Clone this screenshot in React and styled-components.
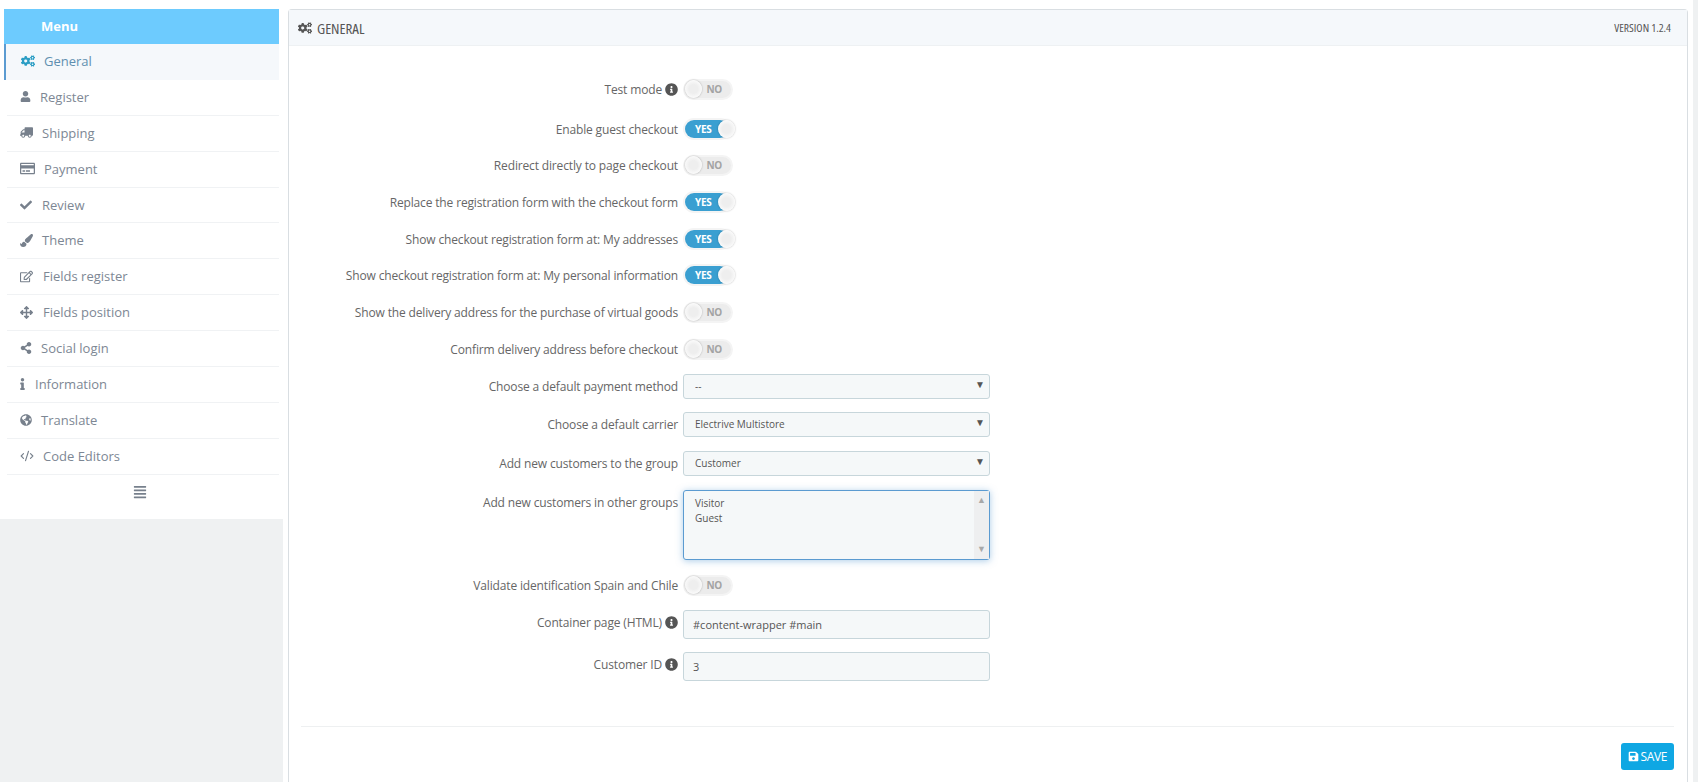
import React from "react";
import styled, { createGlobalStyle } from "styled-components";
import {
  FaCogs,
  FaUser,
  FaTruck,
  FaRegCreditCard,
  FaCheck,
  FaPaintBrush,
  FaRegEdit,
  FaArrowsAlt,
  FaShareAlt,
  FaInfo,
  FaGlobeAmericas,
  FaAlignJustify,
  FaInfoCircle,
  FaSave,
} from "react-icons/fa";
import { CodeXml } from "lucide-react";

const GlobalStyle = createGlobalStyle`
  html, body {
    margin: 0;
    height: 782px;
    overflow: hidden;
    background: #fff;
    font-family: "Open Sans", "Noto Sans", sans-serif;
  }
  * { box-sizing: border-box; }
`;

const Page = styled.div`
  display: flex;
  height: 782px;
  background: #fff;
`;

const Sidebar = styled.aside`
  flex: 0 0 283px;
  padding-top: 9px;
  background: linear-gradient(#fff 519px, #eff1f2 519px);
`;

const SidebarInner = styled.div`
  width: 283px;
  height: 510px;
  padding-left: 4px;
  padding-right: 4px;
  background: #fff;
`;

const MenuTitle = styled.div`
  height: 35px;
  padding-left: 37px;
  background: #6dcbfe;
  color: #fff;
  font-size: 13px;
  font-weight: 700;
  line-height: 34px;
`;

const MenuItem = styled.div`
  display: flex;
  align-items: center;
  gap: ${(p) => p.$gap || 8}px;
  height: 35.9px;
  margin-left: ${(p) => (p.$active ? 0 : 3)}px;
  padding: 0 0 1px ${(p) => (p.$active ? 15 : 13)}px;
  font-size: 13px;
  color: ${(p) => (p.$active ? "#5f8fb0" : "#7d8794")};
  background: ${(p) => (p.$active ? "#f5f8fb" : "#fff")};
  border-left: ${(p) => (p.$active ? "2px solid #5b9bd1" : "none")};
  border-bottom: ${(p) => (p.$active ? "none" : "1px solid #f0f2f4")};

  svg {
    flex: none;
    color: ${(p) => (p.$active ? "#2a9dc4" : "#77808c")};
  }
`;

const FlippedTruck = styled(FaTruck)`
  transform: scaleX(-1);
`;

const SlimInfo = styled(FaInfo)`
  width: 5px;
  height: 12px;
`;

const MenuToggle = styled.div`
  display: flex;
  justify-content: center;
  padding: 10px 3px 0 0;
  color: #77808c;
`;

const Panel = styled.main`
  flex: 0 0 1400px;
  margin: 9px 0 0 5px;
  border: 1px solid #d9dee2;
  border-bottom: none;
  border-radius: 4px 4px 0 0;
  background: #fff;
`;

const Strip = styled.div`
  flex: 1;
  background: linear-gradient(to right, #fff 5px, #eff1f2 5px);
`;

const PanelHeader = styled.header`
  display: flex;
  align-items: center;
  justify-content: space-between;
  height: 36px;
  padding: 0 16px 0 9px;
  background: #f5f8fb;
  border-bottom: 1px solid #eef1f3;
  color: #555;
`;

const HeaderTitle = styled.h3`
  display: flex;
  align-items: center;
  gap: 5px;
  margin: 0;
  font-size: 15px;
  font-weight: 400;
  font-stretch: 75%;
`;

const Version = styled.span`
  font-size: 11.5px;
  font-stretch: 75%;
`;

const Form = styled.form`
  display: flex;
  flex-direction: column;
  padding: 29px 0 0;
  height: 680px;
`;

const Row = styled.div`
  display: flex;
  align-items: ${(p) => (p.$top ? "flex-start" : "center")};
  gap: 5px;
  flex: none;
  height: ${(p) => p.$h || 28}px;
  margin-top: ${(p) => p.$mt || 0}px;
`;

const Label = styled.label`
  display: flex;
  align-items: center;
  justify-content: flex-end;
  gap: 3px;
  flex: 0 0 389px;
  font-size: 12px;
  letter-spacing: -0.15px;
  color: #666;
  white-space: nowrap;
  padding-top: ${(p) => (p.$top ? 4 : 0)}px;
  padding-bottom: ${(p) => (p.$raised ? 4 : 0)}px;

  svg {
    color: #555;
  }
`;

const Toggle = styled.div`
  position: relative;
  display: flex;
  align-items: center;
  width: ${(p) => (p.$on ? 50 : 46)}px;
  height: 18px;
  margin-left: 2px;
`;

const Track = styled.div`
  display: flex;
  align-items: center;
  justify-content: ${(p) => (p.$on ? "flex-start" : "flex-end")};
  width: ${(p) => (p.$on ? 44 : 46)}px;
  height: ${(p) => (p.$on ? 18 : 17)}px;
  padding: ${(p) => (p.$on ? "0 0 0 10px" : "0 9px 0 0")};
  border-radius: 9px;
  background: ${(p) => (p.$on ? "#3a9fd1" : "#ececec")};
  box-shadow: 0 0 0 2px #f4f4f4;
  color: ${(p) => (p.$on ? "#fff" : "#a3a3a3")};
  font-size: 10px;
  font-weight: 700;
  letter-spacing: -0.3px;
`;

const Knob = styled.span`
  position: absolute;
  top: 0;
  left: ${(p) => (p.$on ? 33 : 0)}px;
  width: 17px;
  height: 18px;
  border-radius: 50%;
  background: radial-gradient(circle, #eeeeee 35%, #ffffff 85%);
  box-shadow: 0 0 2px rgba(0, 0, 0, 0.3);
`;

const SelectBox = styled.div`
  position: relative;
  width: 307px;
`;

const Select = styled.select`
  display: block;
  width: 100%;
  height: ${(p) => p.$h || 25}px;
  padding: 0 10px 0 11px;
  appearance: none;
  border: 1px solid #c7d6db;
  border-radius: 3px;
  background: #f5f8f9;
  color: #555;
  font-family: inherit;
  font-size: 10px;
  outline: none;
`;

const Arrow = styled.span`
  position: absolute;
  top: 3px;
  right: 5px;
  color: #555;
  font-size: 10px;
  pointer-events: none;
`;

const ListBox = styled.div`
  display: flex;
  width: 307px;
  height: 70px;
  border: 1px solid #5b9bd1;
  border-radius: 3px;
  background: #f5f8f9;
  box-shadow: 0 1px 7px rgba(91, 155, 209, 0.5);
`;

const ListItems = styled.div`
  flex: 1;
  padding: 5px 11px;
  color: #555;
  font-size: 10px;
  line-height: 15px;
`;

const ScrollRail = styled.div`
  display: flex;
  flex-direction: column;
  justify-content: space-between;
  align-items: center;
  width: 15px;
  padding: 4px 0 5px;
  background: #eeeff0;
  color: #a8a8a8;
  font-size: 9px;
  line-height: 10px;
`;

const TextInput = styled.input`
  display: block;
  width: 307px;
  height: ${(p) => p.$h || 29}px;
  padding: 0 9px;
  border: 1px solid #c7d6db;
  border-radius: 3px;
  background: #f5f8f9;
  color: #555;
  font-family: inherit;
  font-size: 11px;
  outline: none;
`;

const PanelFooter = styled.footer`
  display: flex;
  justify-content: flex-end;
  margin: 0 13px 0 12px;
  padding-top: 16px;
  border-top: 1px solid #eef0f1;
`;

const SaveButton = styled.button`
  display: flex;
  align-items: center;
  gap: 2px;
  height: 27px;
  padding: 0 7px;
  border: none;
  border-radius: 3px;
  background: #0fa7e3;
  color: #fff;
  font-family: inherit;
  font-size: 12px;
  letter-spacing: -0.4px;
`;

const menu = [
  { label: "General", Icon: FaCogs, size: 14, active: true, gap: 9 },
  { label: "Register", Icon: FaUser, size: 11, gap: 9 },
  { label: "Shipping", Icon: FlippedTruck, size: 13, gap: 9 },
  { label: "Payment", Icon: FaRegCreditCard, size: 15, gap: 9 },
  { label: "Review", Icon: FaCheck, size: 12, gap: 10 },
  { label: "Theme", Icon: FaPaintBrush, size: 13, gap: 9 },
  { label: "Fields register", Icon: FaRegEdit, size: 13, gap: 10 },
  { label: "Fields position", Icon: FaArrowsAlt, size: 13, gap: 10 },
  { label: "Social login", Icon: FaShareAlt, size: 12, gap: 9 },
  { label: "Information", Icon: SlimInfo, gap: 10 },
  { label: "Translate", Icon: FaGlobeAmericas, size: 12, gap: 9 },
  { label: "Code Editors", Icon: CodeXml, size: 14, gap: 9 },
];

const Switch = ({ on }) => (
  <Toggle $on={on}>
    <Track $on={on}>{on ? "YES" : "NO"}</Track>
    <Knob $on={on} />
  </Toggle>
);

const Info = () => <FaInfoCircle size={13} />;

const Dropdown = ({ value }) => (
  <SelectBox>
    <Select defaultValue={value}>
      <option>{value}</option>
    </Select>
    <Arrow>▼</Arrow>
  </SelectBox>
);

export default function App() {
  return (
    <Page>
      <GlobalStyle />
      <Sidebar>
        <SidebarInner>
          <MenuTitle>Menu</MenuTitle>
          {menu.map(({ label, Icon, size, active, gap }) => (
            <MenuItem key={label} $active={active} $gap={gap}>
              <Icon size={size} />
              {label}
            </MenuItem>
          ))}
          <MenuToggle>
            <FaAlignJustify size={14} />
          </MenuToggle>
        </SidebarInner>
      </Sidebar>
      <Panel>
        <PanelHeader>
          <HeaderTitle>
            <FaCogs size={14} />
            GENERAL
          </HeaderTitle>
          <Version>VERSION 1.2.4</Version>
        </PanelHeader>
        <Form>
          <Row>
            <Label>
              Test mode <Info />
            </Label>
            <Switch />
          </Row>
          <Row $mt={12}>
            <Label>Enable guest checkout</Label>
            <Switch on />
          </Row>
          <Row $mt={8}>
            <Label>Redirect directly to page checkout</Label>
            <Switch />
          </Row>
          <Row $mt={9}>
            <Label>Replace the registration form with the checkout form</Label>
            <Switch on />
          </Row>
          <Row $mt={9}>
            <Label>Show checkout registration form at: My addresses</Label>
            <Switch on />
          </Row>
          <Row $mt={8}>
            <Label>Show checkout registration form at: My personal information</Label>
            <Switch on />
          </Row>
          <Row $mt={9}>
            <Label>Show the delivery address for the purchase of virtual goods</Label>
            <Switch />
          </Row>
          <Row $mt={9}>
            <Label>Confirm delivery address before checkout</Label>
            <Switch />
          </Row>
          <Row $mt={9}>
            <Label>Choose a default payment method</Label>
            <Dropdown value="--" />
          </Row>
          <Row $mt={10}>
            <Label>Choose a default carrier</Label>
            <Dropdown value="Electrive Multistore" />
          </Row>
          <Row $mt={11}>
            <Label>Add new customers to the group</Label>
            <Dropdown value="Customer" />
          </Row>
          <Row $h={70} $mt={13} $top>
            <Label $top>Add new customers in other groups</Label>
            <ListBox>
              <ListItems>
                <div>Visitor</div>
                <div>Guest</div>
              </ListItems>
              <ScrollRail>
                <span>▲</span>
                <span>▼</span>
              </ScrollRail>
            </ListBox>
          </Row>
          <Row $mt={11}>
            <Label>Validate identification Spain and Chile</Label>
            <Switch />
          </Row>
          <Row $h={29} $mt={11}>
            <Label $raised>
              Container page (HTML) <Info />
            </Label>
            <TextInput defaultValue="#content-wrapper #main" />
          </Row>
          <Row $h={29} $mt={13}>
            <Label $raised>
              Customer ID <Info />
            </Label>
            <TextInput defaultValue="3" />
          </Row>
        </Form>
        <PanelFooter>
          <SaveButton>
            <FaSave size={11} />
            SAVE
          </SaveButton>
        </PanelFooter>
      </Panel>
      <Strip />
    </Page>
  );
}
